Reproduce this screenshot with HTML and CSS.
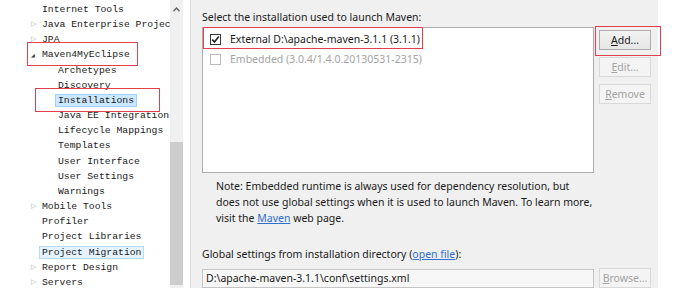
FILE: index.html
```html
<!DOCTYPE html>
<html>
<head>
<meta charset="utf-8">
<link rel="stylesheet" href="styles.css">
</head>
<body>
<div class="page">
  <div class="tree">
    <div class="row l1">Internet Tools</div>
    <div class="row l1"><span class="tw">▷</span>Java Enterprise Project</div>
    <div class="row l1"><span class="tw">▷</span>JPA</div>
    <div class="row l1"><span class="tw open">◢</span>Maven4MyEclipse</div>
    <div class="row l2">Archetypes</div>
    <div class="row l2">Discovery</div>
    <div class="row l2"><span class="sel">Installations</span></div>
    <div class="row l2">Java EE Integration</div>
    <div class="row l2">Lifecycle Mappings</div>
    <div class="row l2">Templates</div>
    <div class="row l2">User Interface</div>
    <div class="row l2">User Settings</div>
    <div class="row l2">Warnings</div>
    <div class="row l1"><span class="tw">▷</span>Mobile Tools</div>
    <div class="row l1">Profiler</div>
    <div class="row l1">Project Libraries</div>
    <div class="row l1"><span class="sel soft">Project Migration</span></div>
    <div class="row l1"><span class="tw">▷</span>Report Design</div>
    <div class="row l1"><span class="tw">▷</span>Servers</div>
  </div>
  <div class="scrollbar">
    <div class="chev">
      <svg width="7" height="5" viewBox="0 0 7 5"><path d="M0.5 4.2 L3.5 1 L6.5 4.2" fill="none" stroke="#606060" stroke-width="1.3"/></svg>
    </div>
    <div class="thumb"></div>
  </div>
  <div class="panel">
    <div class="label top">Select the installation used to launch Maven:</div>
    <div class="pick">
      <div class="list">
        <div class="item"><span class="cb checked"><svg width="9" height="9" viewBox="0 0 9 9"><path d="M1.2 4.6 L3.5 7 L7.8 1.6" fill="none" stroke="#222" stroke-width="1.6"/></svg></span>External D:\apache-maven-3.1.1 (3.1.1)</div>
        <div class="item dis"><span class="cb"></span>Embedded (3.0.4/1.4.0.20130531-2315)</div>
      </div>
      <div class="btns">
        <div class="btn"><u>A</u>dd...</div>
        <div class="btn off"><u>E</u>dit...</div>
        <div class="btn off"><u>R</u>emove</div>
      </div>
    </div>
    <div class="note">Note: Embedded runtime is always used for dependency resolution, but<br>does not use global settings when it is used to launch Maven. To learn more,<br>visit the <a>Maven</a> web page.</div>
    <div class="label global">Global settings from installation directory (<a>open file</a>):</div>
    <div class="fieldrow">
      <div class="field">D:\apache-maven-3.1.1\conf\settings.xml</div>
      <div class="btn off browse"><u>B</u>rowse...</div>
    </div>
  </div>
  <div class="mark m1"></div>
  <div class="mark m2"></div>
  <div class="mark m3"></div>
  <div class="mark m4"></div>
</div>
</body>
</html>
```
FILE: styles.css
```css
html, body { margin: 0; padding: 0; background: #fff; }
.page { position: relative; width: 679px; height: 296px; display: flex; overflow: hidden; }

.tree { width: 170px; padding-top: 2px; font-family: "Liberation Mono", monospace; font-size: 9.75px; color: #1a1a1a; overflow: hidden; white-space: nowrap; }
.row { height: 15.17px; line-height: 15.17px; position: relative; }
.row.l1 { padding-left: 42px; }
.row.l2 { padding-left: 58px; }
.tw { position: absolute; left: 31px; top: 0; font-family: "DejaVu Sans", sans-serif; font-size: 7px; color: #a8a8a8; }
.tw.open { color: #404040; font-size: 5px; left: 31px; top: 1px; }
.sel { display: inline-block; margin-left: -3px; padding: 0 2px; line-height: 11px; background: #cce8ff; border: 1px solid #99d1ff; }
.sel.soft { background: #e5f3ff; border-color: #b8dcf7; }

.scrollbar { width: 13px; height: 288px; background: #f0f0f0; display: flex; flex-direction: column; align-items: center; }
.chev { height: 16px; display: flex; align-items: center; justify-content: center; padding-top: 2px; box-sizing: border-box; }
.thumb { width: 13px; height: 143px; background: #cdcdcd; margin-top: 126px; }

.panel { margin-left: 7px; width: 468px; height: 288px; background: #f0f0f0; border-left: 1px solid #d9d9d9; box-sizing: border-box; padding-left: 11px; font-family: "Noto Sans", sans-serif; font-size: 10.5px; color: #1a1a1a; display: flex; flex-direction: column; }
.label.top { height: 27px; line-height: 12px; padding-top: 11px; box-sizing: border-box; }
.pick { display: flex; gap: 5px; align-items: flex-start; }
.list { width: 392px; height: 146px; box-sizing: border-box; background: #fff; border: 1px solid #acacac; padding-top: 1px; }
.item { height: 20px; display: flex; align-items: center; padding-left: 7px; white-space: nowrap; }
.item.dis { color: #a3a3a3; }
.cb { width: 11px; height: 11px; box-sizing: border-box; border: 1px solid #bcbcbc; background: #fff; margin-right: 9px; display: flex; align-items: center; justify-content: center; }
.cb.checked { border-color: #333; }
.btns { display: flex; flex-direction: column; gap: 7px; padding-top: 3px; }
.btn { width: 52px; height: 20px; box-sizing: border-box; border: 1px solid #adadad; background: linear-gradient(#f2f2f2, #e6e6e6); display: flex; align-items: center; justify-content: center; font-size: 10.5px; color: #1a1a1a; }
.btn.off { border-color: #d9d9d9; background: #f4f4f4; color: #a3a3a3; }
.btn u { text-decoration: underline; }
.note { margin-top: 5px; padding-left: 14px; width: 420px; line-height: 16px; white-space: nowrap; }
a { color: #2f6fce; text-decoration: underline; }
.label.global { margin-top: 21px; line-height: 14px; }
.fieldrow { margin-top: 7px; display: flex; gap: 5px; align-items: center; }
.field { width: 392px; height: 19px; box-sizing: border-box; border: 1px solid #c5c5c5; background: #f7f7f7; padding-left: 3px; line-height: 17px; white-space: nowrap; }
.browse { height: 20px; }

.mark { position: absolute; border: 1.5px solid #e0414c; box-sizing: border-box; }
.m1 { left: 27px; top: 42px; width: 111px; height: 24px; }
.m2 { left: 35px; top: 88px; width: 125px; height: 24px; }
.m3 { left: 203px; top: 27px; width: 220px; height: 22px; }
.m4 { left: 595px; top: 26px; width: 66px; height: 30px; }
```
